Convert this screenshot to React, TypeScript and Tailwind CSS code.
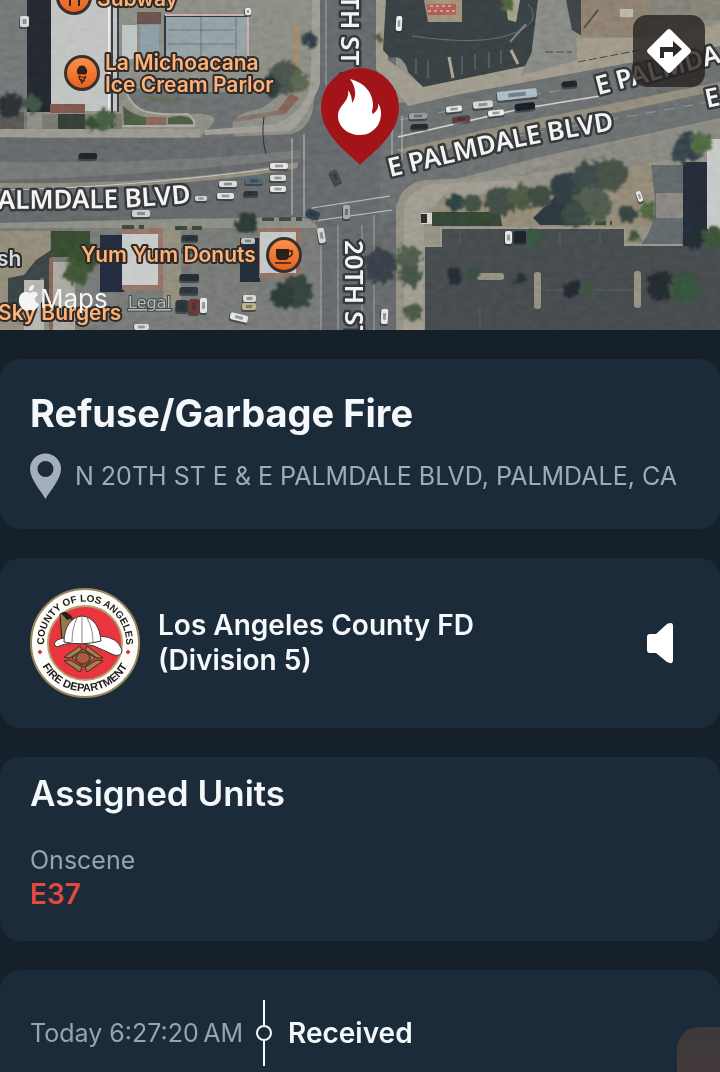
import type { ReactNode } from "react"

type Spot = { x: number; y: number; r: number; c: string };
type Box = { x: number; y: number; w: number; h: number; c: string; a?: number };

const TREES: Spot[] = [
    { x: 32, y: 103, r: 9, c: "#3d4f42" }, { x: 104, y: 120, r: 11, c: "#43583f" }, { x: 92, y: 124, r: 7, c: "#36492f" },
    { x: 285, y: 78, r: 17, c: "#46504a" }, { x: 300, y: 82, r: 10, c: "#55604c" }, { x: 270, y: 86, r: 10, c: "#2e3a3b" },
    { x: 455, y: 203, r: 9, c: "#2c3c3c" }, { x: 472, y: 203, r: 9, c: "#3e4b3d" }, { x: 500, y: 202, r: 15, c: "#3e4943" },
    { x: 522, y: 197, r: 12, c: "#48523f" }, { x: 540, y: 196, r: 12, c: "#3a463e" }, { x: 566, y: 187, r: 16, c: "#2f3b40" },
    { x: 590, y: 180, r: 18, c: "#3b4544" }, { x: 612, y: 174, r: 16, c: "#424d43" }, { x: 592, y: 205, r: 19, c: "#4b5649" },
    { x: 574, y: 214, r: 13, c: "#39443f" }, { x: 628, y: 214, r: 9, c: "#353f3c" }, { x: 647, y: 211, r: 8, c: "#4c5f3c" },
    { x: 408, y: 258, r: 13, c: "#4b5848" }, { x: 410, y: 276, r: 11, c: "#434f42" }, { x: 414, y: 312, r: 9, c: "#46523f" },
    { x: 380, y: 266, r: 17, c: "#343c44" }, { x: 296, y: 292, r: 17, c: "#33413a" }, { x: 283, y: 297, r: 12, c: "#2a3735" },
    { x: 84, y: 258, r: 15, c: "#34492e" }, { x: 76, y: 272, r: 12, c: "#3b5133" }, { x: 662, y: 286, r: 15, c: "#23292f" },
    { x: 684, y: 287, r: 15, c: "#33503a" }, { x: 454, y: 275, r: 8, c: "#23292e" }, { x: 474, y: 274, r: 6, c: "#34493a" },
    { x: 520, y: 279, r: 6, c: "#272d31" }, { x: 572, y: 289, r: 8, c: "#22282d" }, { x: 587, y: 288, r: 7, c: "#37503b" },
    { x: 534, y: 237, r: 8, c: "#33523a" }, { x: 633, y: 236, r: 6, c: "#3c5034" }, { x: 690, y: 147, r: 14, c: "#2f3c46" },
    { x: 701, y: 144, r: 11, c: "#4d6340" }, { x: 680, y: 154, r: 9, c: "#36434a" }, { x: 694, y: 240, r: 10, c: "#222b31" },
    { x: 713, y: 238, r: 12, c: "#3a4d38" }, { x: 310, y: 39, r: 8, c: "#2f3a41" }, { x: 10, y: 105, r: 12, c: "#2a2e33" },
    { x: 247, y: 224, r: 11, c: "#2b3933" }, { x: 377, y: 38, r: 5, c: "#4d573c" }, { x: 508, y: 4, r: 6, c: "#4d5c3c" },
];

const CARS: Box[] = [
    { x: 20, y: 16, w: 9, h: 11, c: "#d4d8d8" }, { x: 79, y: 153, w: 18, h: 6, c: "#1c2127" },
    { x: 409, y: 113, w: 18, h: 6, c: "#8c9698", a: -3 }, { x: 411, y: 124, w: 17, h: 5, c: "#22272c", a: -3 },
    { x: 446, y: 106, w: 16, h: 6, c: "#e4e6e4", a: -6 }, { x: 473, y: 101, w: 20, h: 7, c: "#cfd2d0", a: -6 },
    { x: 453, y: 116, w: 17, h: 6, c: "#5b3435", a: -6 }, { x: 488, y: 110, w: 16, h: 6, c: "#e8eaea", a: -6 },
    { x: 515, y: 103, w: 20, h: 7, c: "#181e23", a: -7 }, { x: 562, y: 81, w: 15, h: 6, c: "#1e2429", a: -5 },
    { x: 497, y: 90, w: 40, h: 9, c: "#a5b6c0", a: -6 }, { x: 396, y: 16, w: 6, h: 15, c: "#eef0f0", a: 3 },
    { x: 270, y: 163, w: 18, h: 6, c: "#e4e5e2" }, { x: 270, y: 175, w: 16, h: 6, c: "#dadcda" }, { x: 270, y: 186, w: 16, h: 6, c: "#e4e5e2" },
    { x: 219, y: 181, w: 18, h: 6, c: "#d8dad8" }, { x: 245, y: 178, w: 18, h: 6, c: "#4c6270" }, { x: 217, y: 193, w: 17, h: 6, c: "#dcdedc" },
    { x: 195, y: 196, w: 12, h: 5, c: "#cdd0ce" }, { x: 244, y: 191, w: 14, h: 5, c: "#2b3136" }, { x: 132, y: 210, w: 18, h: 7, c: "#c9cccb" },
    { x: 331, y: 170, w: 8, h: 14, c: "#3a4650", a: -25 }, { x: 308, y: 208, w: 8, h: 12, c: "#2b3d4a", a: -70 },
    { x: 343, y: 205, w: 7, h: 14, c: "#9fa5a5" }, { x: 318, y: 228, w: 7, h: 15, c: "#d0d3d2", a: -10 },
    { x: 381, y: 309, w: 7, h: 15, c: "#e4e6e4", a: 3 }, { x: 182, y: 235, w: 16, h: 6, c: "#2a3036" },
    { x: 182, y: 246, w: 16, h: 6, c: "#555b5b" }, { x: 180, y: 274, w: 19, h: 7, c: "#222a30" }, { x: 180, y: 287, w: 18, h: 7, c: "#2b3438" },
    { x: 241, y: 238, w: 14, h: 6, c: "#b7c0c5" }, { x: 176, y: 300, w: 12, h: 12, c: "#2c3439" }, { x: 189, y: 299, w: 10, h: 15, c: "#6b3330" },
    { x: 200, y: 298, w: 7, h: 15, c: "#e0e3e3" }, { x: 243, y: 295, w: 13, h: 7, c: "#d6d9d8" }, { x: 242, y: 303, w: 14, h: 7, c: "#b9ac82" },
    { x: 230, y: 314, w: 18, h: 7, c: "#e2e5e6", a: 14 }, { x: 134, y: 324, w: 15, h: 6, c: "#d3d6d4" },
    { x: 505, y: 231, w: 7, h: 13, c: "#e2e4e4" }, { x: 514, y: 231, w: 12, h: 12, c: "#1c2227" }, { x: 245, y: 8, w: 6, h: 7, c: "#eceeee" },
    { x: 637, y: 191, w: 5, h: 11, c: "#e7e7e3", a: -20 },
];

function MapGround() {
    return (
        <g>
            <rect width="720" height="330" fill="#84857c" />

            {/* north-west block */}
            <rect width="27" height="138" fill="#6d7070" />
            <rect x="27" width="25" height="112" fill="#20272f" />
            <rect x="51" width="67" height="111" fill="#bcbfbd" />
            <rect x="0" y="112" width="24" height="20" fill="#575250" />
            <rect x="50" y="104" width="35" height="9" fill="#775349" />
            <rect x="42" y="114" width="80" height="16" fill="#6f7268" />
            <rect x="58" y="114" width="27" height="15" fill="#323c36" />
            <path d="M112 0V128M118 0V112" stroke="#373b3f" strokeWidth="2" />
            <path d="M109 0V108" stroke="#e8e9e7" strokeWidth="2" />
            <rect x="122" y="25" width="15" height="34" fill="#b8c1c0" />
            <rect x="140" y="25" width="19" height="34" fill="#8496a0" />
            <rect x="137" y="12" width="24" height="12" fill="#644e48" />
            <rect x="165" y="16" width="83" height="44" fill="#8d9a9e" stroke="#2c3338" strokeWidth="2" />
            <path d="M165 15H248V56" stroke="#c3aaa4" strokeWidth="2" fill="none" />
            <path d="M201 17V58M236 17V58M168 30H235M168 44H235" stroke="#5e6a70" />
            <path d="M296 26V68" stroke="#a08062" strokeWidth="5" />
            <path d="M126 88C134 112 145 116 190 114S204 130 200 138H235C228 118 236 114 262 108L280 95Z" fill="#66696a" />
            <path d="M144 96C150 104 178 104 188 98Z" fill="#5c6654" />
            <path d="M123 106Q132 115 146 117V127H124Z" fill="#48583f" />
            <path d="M168 118Q190 112 194 124L168 124Z" fill="#48583f" />
            <path d="M146 117H166V125H146Z" fill="#835f53" />
            <path d="M125 88C132 112 146 116 188 114Q196 120 194 126H122" fill="none" stroke="#a6a498" strokeWidth="2" />
            <path d="M233 118L280 110L292 94L300 98L285 114L234 122Z" fill="#7c6b60" />
            <path d="M278 110L290 94L299 98L285 113Z" fill="#7c5b50" />
            <rect x="0" y="129" width="200" height="8" fill="#92928a" />

            {/* south-west block */}
            <rect y="228" width="320" height="102" fill="#6f7270" />
            <rect x="0" y="231" width="50" height="99" fill="#8a8473" />
            <rect x="51" y="231" width="39" height="26" fill="#34472f" />
            <path d="M36 260L51 250V310H8V278L24 275Z" fill="#393f42" />
            <rect x="50" y="262" width="25" height="68" fill="#a5a39b" />
            <path d="M51 258V330M42 278V330" stroke="#806055" strokeWidth="4" />
            <rect x="24" y="280" width="20" height="50" fill="#b0b0ab" />
            <rect x="100" y="235" width="24" height="57" fill="#202b3b" />
            <rect x="122" y="228" width="44" height="62" fill="#8f6e62" />
            <rect x="122" y="234" width="36" height="51" fill="#c3c7c6" />
            <rect x="163" y="228" width="18" height="80" fill="#8a8675" />
            <rect x="240" y="238" width="20" height="44" fill="#232c34" />
            <rect x="259" y="228" width="42" height="50" fill="#8b6a5d" />
            <rect x="260" y="232" width="36" height="41" fill="#c0c4c4" />
            <path d="M122 227H144M175 228H202M262 219H302" stroke="#394535" strokeWidth="4" strokeDasharray="12 5" />

            {/* roads */}
            <path d="M0 138H200L290 134Q312 130 314 100V0H396V330H322V240Q320 220 300 217L170 219L0 223Z" fill="#606465" />
            <path d="M380 106L460 94L720 46V118L540 157L460 178Q404 186 400 200L380 230Z" fill="#65696a" />
            <path d="M0 162Q170 164 300 150V158Q150 176 0 180Z" fill="#6e716f" />
            <path d="M0 183Q180 185 298 162L297 168Q180 190 0 188Z" fill="#878376" />
            <path d="M0 190Q120 188 270 169" stroke="#c2c3bd" fill="none" />
            <path d="M396 150L520 122L720 82V90L525 132L412 156Z" fill="#8a8475" />
            <path d="M398 137L520 109L600 96" stroke="#cccdc8" fill="none" strokeWidth="1.5" />
            <path d="M440 150L720 100M400 120L560 90" stroke="#888b89" strokeDasharray="10 9" />
            <path d="M326 0V85M362 225V330M374 215V330M338 225V330" stroke="#919492" />
            <path d="M292 138V215M304 134V217M392 118V165M402 116V160" stroke="#b2b5b2" />
            <path d="M312 208L390 196M314 221L392 210" stroke="#b8bbb8" />
            <path d="M312 0H320V84Q306 120 290 131L205 135V130L276 124Q309 110 311 78Z" fill="#97978d" />
            <path d="M264 117Q261 136 266 154" stroke="#252b2f" fill="none" />

            {/* north-east block */}
            <path d="M376 0H388V60L420 84L640 46L720 26V46L460 94L408 106Q392 84 376 70Z" fill="#989384" />
            <path d="M386 0H538L530 65L423 87L408 72Q404 54 390 58L383 50Z" fill="#363d40" />
            <path d="M538 0H578V60L520 76L533 50Z" fill="#7f817d" />
            <path d="M566 0H582V36L572 30Z" fill="#3c4143" />
            <rect x="581" y="0" width="68" height="37" fill="#86796b" />
            <rect x="649" y="0" width="71" height="20" fill="#7d7a71" />
            <path d="M576 38H650L720 24V36L578 64Z" fill="#9a9281" />
            <path d="M584 28L598 10" stroke="#4c4740" strokeWidth="2" />
            <rect x="620" y="9" width="13" height="8" fill="#b6b1a6" />
            <path d="M545 52H572M578 62L640 50" stroke="#3b3e3b" strokeDasharray="8 3" />
            <path d="M424 0H462V22H428Z" fill="#9a8b73" />
            <path d="M426 4H456V15H428Z" fill="#a85a52" />
            <path d="M430 6H452M428 11H456" stroke="#d0948a" strokeWidth="2" strokeDasharray="3 3" />
            <path d="M505 0H520L516 22L508 20Z" fill="#a09a83" />
            <path d="M412 36Q480 46 512 34T528 4" stroke="#60686a" fill="none" />
            <path d="M416 58V74M428 60V78M462 56V74M475 54V70M489 52V68M501 50V64" stroke="#666e6f" />
            <path d="M449 57L453 78M511 50L518 64" stroke="#a69d8b" strokeWidth="3" />
            <path d="M510 42L526 24" stroke="#737a77" strokeWidth="2" />

            {/* south-east block */}
            <path d="M396 330V210Q400 184 424 180L515 177L540 160L720 120V330Z" fill="#8b887d" />
            <path d="M404 228V206Q412 188 434 184L514 180L520 186L480 194L448 198L424 212V330H404Z" fill="#9a9589" />
            <path d="M424 226L440 198L560 190L620 160L650 165Q660 200 650 227Z" fill="#8b8170" />
            <path d="M515 177L575 152L720 120V150L640 165L560 168Z" fill="#818079" />
            <path d="M651 165H684V245H640Q655 230 655 200Z" fill="#5c6265" />
            <rect x="656" y="193" width="27" height="25" fill="#817e79" />
            <path d="M424 246V330H720V245H625V228H441V246Z" fill="#42464a" />
            <path d="M424 330V246H441V228H625V245H690" fill="none" stroke="#938f83" strokeWidth="2" />
            <rect x="683" y="162" width="25" height="84" fill="#222c36" />
            <rect x="707" y="139" width="13" height="90" fill="#c2c5c4" />
            <path d="M533 218L572 180L596 196L574 225H540Z" fill="#2c343a" />
            <path d="M432 212H500L502 226H432Z" fill="#304233" />
            <rect x="421" y="213" width="11" height="11" fill="#d2d2c9" />
            <rect x="421" y="214" width="6" height="9" fill="#252c2c" />
            <path d="M580 223H612" stroke="#34452f" strokeWidth="4" strokeDasharray="11 4" />
            <rect x="534" y="272" width="7" height="37" rx="3" fill="#8b887a" />
            <rect x="634" y="271" width="7" height="37" rx="3" fill="#8b887a" />
            <rect x="477" y="273" width="27" height="7" rx="3" fill="#8b8879" />
            <path d="M542 290H634M480 308V330M560 232V245M600 232V245M460 232V245" stroke="#575b5d" />
        </g>
    );
}

type PlaceProps = { x: number; y: number; children: ReactNode };

function Place({ x, y, children }: PlaceProps) {
    return (
        <g transform={`translate(${x} ${y})`}>
            <circle r="18" fill="#37302c" />
            <circle r="15" fill="url(#orange)" />
            {children}
        </g>
    );
}

function MapView() {
    return (
        <section className="relative h-[330px] overflow-hidden">
            <svg viewBox="0 0 720 330" preserveAspectRatio="xMidYMid slice" className="size-full" role="img" aria-label="Map of the incident">
                <defs>
                    <linearGradient id="orange" x2="0" y2="1">
                        <stop stopColor="#f98f49" />
                        <stop offset="1" stopColor="#e8611f" />
                    </linearGradient>
                    <filter id="rough" x="-10%" y="-10%" width="120%" height="120%">
                        <feTurbulence type="fractalNoise" baseFrequency="0.16" numOctaves="3" seed="4" />
                        <feDisplacementMap in="SourceGraphic" scale="13" xChannelSelector="R" yChannelSelector="G" />
                        <feGaussianBlur stdDeviation="0.9" />
                    </filter>
                    <filter id="grain" x="0" y="0" width="100%" height="100%">
                        <feTurbulence type="fractalNoise" baseFrequency="0.12 0.18" numOctaves="3" seed="9" />
                        <feColorMatrix type="saturate" values="0" />
                        <feComponentTransfer>
                            <feFuncA type="linear" slope="0" intercept="1" />
                        </feComponentTransfer>
                    </filter>
                    <filter id="soft"><feGaussianBlur stdDeviation="0.7" /></filter>
                    <path id="east-road" d="M390 177L470 158Q540 141 640 126" />
                    <path id="east-road-far" d="M598 95L640 84L760 52" />
                    <path id="west-road" d="M-17 209L110 208Q150 207 210 201" />
                </defs>

                <g filter="url(#soft)">
                    <MapGround />
                    <g filter="url(#rough)">
                        {TREES.map((t, i) => <circle key={i} cx={t.x} cy={t.y} r={t.r} fill={t.c} />)}
                    </g>
                    {CARS.map((c, i) => (
                        <g key={i} transform={`rotate(${c.a ?? 0} ${c.x + c.w / 2} ${c.y + c.h / 2})`}>
                            <rect x={c.x - 1} y={c.y + 1} width={c.w + 1} height={c.h + 1} rx="2" fill="#23282c" opacity="0.6" />
                            <rect x={c.x} y={c.y} width={c.w} height={c.h} rx="2" fill={c.c} />
                            <rect x={c.x + c.w * 0.28} y={c.y + c.h * 0.28} width={c.w * 0.44} height={c.h * 0.44} fill="#20262b" opacity="0.45" />
                        </g>
                    ))}
                </g>
                <rect width="720" height="330" filter="url(#grain)" opacity="0.18" className="mix-blend-overlay" />

                {/* street names */}
                <g fill="#f4f4f4" stroke="#36393b" strokeWidth="5" strokeLinejoin="round" paintOrder="stroke" className="font-['Noto_Sans'] text-[26px] font-semibold">
                    <text><textPath href="#east-road">E PALMDALE BLVD</textPath></text>
                    <text><textPath href="#east-road-far">E PALMDA</textPath></text>
                    <text x="707" y="108" transform="rotate(-12 707 108)">E</text>
                    <text><textPath href="#west-road">PALMDALE BLVD</textPath></text>
                    <text transform="translate(341 -20) rotate(90)">0TH ST E</text>
                    <text transform="translate(345 240) rotate(90)">20TH ST E</text>
                </g>

                {/* businesses */}
                <g fill="#ffb277" stroke="#2c2a2a" strokeWidth="4" strokeLinejoin="round" paintOrder="stroke" className="font-['Inter'] text-[21px] font-semibold">
                    <text x="97" y="6">Subway</text>
                    <text x="105" y="70">La Michoacana</text>
                    <text x="105" y="92">Ice Cream Parlor</text>
                    <text x="81" y="262">Yum Yum Donuts</text>
                    <text x="-2" y="320">Sky Burgers</text>
                    <text x="-3" y="266" fill="#d5d9e0">sh</text>
                </g>

                <Place x={74} y={-3}>
                    <path d="M-4 -8V9M5 -8V9M-7 -8V0H-1V-8" stroke="#2c201b" strokeWidth="2" fill="none" />
                </Place>
                <Place x={82} y={73}>
                    <path d="M-5 0A5 5 0 0 1 -4 -5A4.500 4.500 0 0 1 4 -5A5 5 0 0 1 5 0Q3 3 0 1Q-3 3 -5 0Z" fill="#2c201b" />
                    <path d="M-4 3L4 5M-3 6L3 8M4 3L0 10L-3 4" stroke="#2c201b" strokeWidth="1.200" fill="none" />
                </Place>
                <Place x={284} y={255}>
                    <path d="M-8 -6H5V0Q5 5 1 5H-4Q-8 5 -8 0Z" fill="#2c201b" />
                    <path d="M5 -4H8Q9 1 4 2M-9 8H7" stroke="#2c201b" strokeWidth="1.500" fill="none" />
                </Place>

                {/* attribution */}
                <g fill="#f5f5f5">
                    <path d="M37 293C34 291 32 292 30 293C27 292 24 291 21 294C17 298 19 307 24 310C27 312 28 310 30 310C32 310 34 312 36 309Q39 306 39 304C34 302 34 297 38 295ZM29 291C29 287 31 285 34 285C34 289 32 291 29 291Z" />
                    <text x="40" y="308" className="font-['Inter'] text-[26px]">Maps</text>
                </g>
                <text x="128" y="308" fill="#b4b9ba" stroke="#474b4d" strokeWidth="2" paintOrder="stroke" className="font-['DejaVu_Sans'] text-[16px] underline">Legal</text>

                {/* incident marker */}
                <path d="M360 165C350 154 321 136 321 107A39 39 0 0 1 399 107C399 136 370 154 360 165Z" fill="#a31419" />
                <path d="M350 79C363 82 373 92 373 105C373 109 371 112 373 114C377 111 379 107 378 103C382 109 382 118 378 125C373 132 367 135 360 135C348 135 338 127 338 116C338 105 350 102 348 90C351 94 352 98 352 103C357 97 356 87 350 79Z" fill="#fff" />
            </svg>

            <button aria-label="Directions" className="absolute right-[15px] top-[15px] flex size-[72px] items-center justify-center rounded-[14px] bg-[#25221f]/80">
                <svg viewBox="0 0 46 46" className="size-[46px]" aria-hidden="true">
                    <path d="M21 2Q23 0 25 2L44 21Q46 23 44 25L25 44Q23 46 21 44L2 25Q0 23 2 21Z" fill="#fff" />
                    <path d="M14 30V19H27V13L36 21L27 29V24H18V30Z" fill="#2c2a29" />
                </svg>
            </button>
        </section>
    );
}

function Seal() {
    return (
        <svg viewBox="0 0 110 110" className="size-[110px] shrink-0" role="img" aria-label="Department seal">
            <defs>
                <path id="seal-top" d="M14.500 61A41 41 0 1 1 95.500 61" />
                <path id="seal-bottom" d="M6.500 55A48.500 48.500 0 0 0 103.500 55" />
            </defs>
            <circle cx="55" cy="55" r="54" fill="#fefdf9" stroke="#98875d" strokeWidth="2" />
            <circle cx="55" cy="55" r="37" fill="#e8353f" stroke="#b5a070" strokeWidth="2" />
            <g fill="#20201f" textAnchor="middle" className="font-['Liberation_Sans'] font-bold">
                <text className="text-[10px]"><textPath href="#seal-top" startOffset="50%">COUNTY OF LOS ANGELES</textPath></text>
                <text className="text-[11px]"><textPath href="#seal-bottom" startOffset="50%">FIRE DEPARTMENT</textPath></text>
            </g>
            <path d="M10 62L12 64L10 66L8 64ZM98 62L100 64L98 66L96 64Z" fill="#dc3545" stroke="#dc3545" />
            <path d="M30 26L36 24L42 30L36 54L32 54Z" fill="#94794b" stroke="#252019" />
            <path d="M31 25Q37 22 43 30L37 32Z" fill="#252019" />
            <path d="M24 56Q26 51 34 50L70 48Q88 49 92 62Q92 69 84 67L64 58Q40 52 27 59Z" fill="#fff" stroke="#3a3632" />
            <path d="M34 54C34 39 41 29 52 28C64 29 70 40 71 53Q52 58 34 54Z" fill="#fff" stroke="#3a3632" />
            <path d="M52 28V55M47 30Q42 40 42 54M57 30Q63 40 63 54" stroke="#8a8782" fill="none" />
            <g fill="#9d8255" stroke="#3b2c1c">
                <path d="M34 69L50 58L52 62L40 70ZM73 70L57 58L55 62L67 70Z" />
                <path d="M34 73L50 84L52 79L40 72ZM73 73L57 84L55 79L67 72Z" />
                <path d="M42 70L53 61L65 70L54 79Z" />
            </g>
            <ellipse cx="53" cy="70" rx="7" ry="6" fill="#b05a43" stroke="#5b4228" strokeWidth="2" />
        </svg>
    );
}

export default function App() {
    return (
        <main className="relative flex min-h-screen flex-col gap-[29px] overflow-hidden bg-[#15202b] font-['Inter',sans-serif] text-[#f5f8fa]">
            <MapView />

            <section className="rounded-[20px] bg-[#1c2b3a] p-[30px]">
                <h1 className="text-[38px] font-bold leading-[48px]">Refuse/Garbage Fire</h1>
                <div className="mt-4 flex items-center gap-[14px]">
                    <svg viewBox="0 0 31 46" className="h-[46px] w-[31px] shrink-0" aria-hidden="true">
                        <path fillRule="evenodd" d="M15.500 46C11 38 0 26 0 16A15.500 15.500 0 0 1 31 16C31 26 20 38 15.500 46ZM15.500 8A8 8 0 1 0 15.500 24A8 8 0 0 0 15.500 8Z" fill="#a5afba" />
                    </svg>
                    <p className="whitespace-nowrap text-[25px] leading-8 text-[#a0abb7]">N 20TH ST E &amp; E PALMDALE BLVD, PALMDALE, CA</p>
                </div>
            </section>

            <section className="flex items-center gap-[18px] rounded-[20px] bg-[#1c2b3a] p-[30px]">
                <Seal />
                <h2 className="flex-1 text-[28px] font-semibold leading-[35px]">
                    Los Angeles County FD<br />(Division 5)
                </h2>
                <button aria-label="Listen" className="mr-4">
                    <svg viewBox="0 0 28 42" className="h-[42px] w-7" aria-hidden="true">
                        <path d="M4 12H10L21 2Q27 -1 27 4V38Q27 43 21 40L10 31H4Q1 31 1 28V15Q1 12 4 12Z" fill="#fff" />
                    </svg>
                </button>
            </section>

            <section className="rounded-[20px] bg-[#1c2b3a] px-[30px] pb-[30px] pt-3">
                <h2 className="text-[35px] font-semibold leading-[48px]">Assigned Units</h2>
                <p className="mt-[26px] text-[25px] leading-[34px] text-[#97a3b0]">Onscene</p>
                <p className="text-[28px] font-semibold leading-[34px] text-[#e5483f]">E37</p>
            </section>

            <section className="flex-1 rounded-t-[20px] bg-[#1c2b3a] px-[30px] pt-[30px]">
                <div className="flex items-center">
                    <time className="w-[226px] whitespace-nowrap text-[25px] leading-8 text-[#97a3b0]">Today 6:27:20{"\u202f"}AM</time>
                    <svg viewBox="0 0 16 66" className="h-[66px] w-4 shrink-0" fill="none" stroke="#f5f8fa" strokeWidth="2" aria-hidden="true">
                        <path d="M8 0V26M8 40V66" />
                        <circle cx="8" cy="33" r="7" />
                    </svg>
                    <span className="ml-4 text-[28px] font-semibold leading-8">Received</span>
                </div>
            </section>

            <button aria-label="More" className="absolute bottom-0 right-0 h-[45px] w-[43px] rounded-tl-[22px] bg-linear-to-b from-[#3c393b] to-[#433a3b]" />
        </main>
    );
}
